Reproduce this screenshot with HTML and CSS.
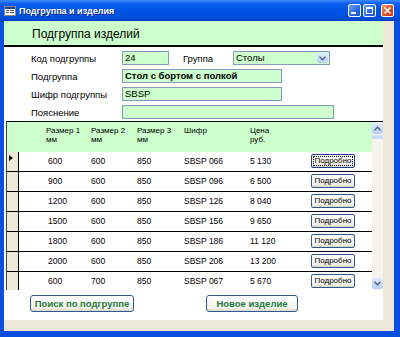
FILE: index.html
```html
<!DOCTYPE html>
<html lang="ru">
<head>
  <meta charset="UTF-8" />
  <title>Подгруппа и изделия</title>
  <link rel="stylesheet" href="styles.css">
</head>
<body>
<div class="window">

  <!-- Заголовок окна -->
  <div class="titlebar">
    <svg class="app-icon" width="12" height="10" viewBox="0 0 12 10">
      <rect x="0.5" y="0.5" width="11" height="9" fill="#fff" stroke="#8a8a8a"/>
      <rect x="1" y="1" width="10" height="2" fill="#1d3f9c"/>
      <rect x="2" y="4" width="3" height="1" fill="#555"/>
      <rect x="6" y="4" width="4" height="1" fill="#555"/>
      <rect x="2" y="6" width="3" height="1" fill="#555"/>
      <rect x="6" y="6" width="4" height="1" fill="#555"/>
    </svg>
    <span class="title">Подгруппа и изделия</span>
    <div class="caption-buttons">
      <span class="cap-btn">
        <svg width="11" height="11" viewBox="0 0 11 11"><rect x="2" y="7" width="5" height="2" fill="#fff"/></svg>
      </span>
      <span class="cap-btn">
        <svg width="11" height="11" viewBox="0 0 11 11"><rect x="2.5" y="2.5" width="6" height="6" fill="none" stroke="#fff"/><rect x="2" y="2" width="7" height="2" fill="#fff"/></svg>
      </span>
      <span class="cap-btn close">
        <svg width="11" height="11" viewBox="0 0 11 11"><path d="M2.5 2.5 L8.5 8.5 M8.5 2.5 L2.5 8.5" stroke="#fff" stroke-width="1.6"/></svg>
      </span>
    </div>
  </div>

  <div class="frame">
    <div class="client">
      <div class="form">

        <div class="form-header">Подгруппа изделий</div>

        <div class="fields">
          <div class="field-row">
            <span class="label">Код подгруппы</span>
            <span class="box box-code">24</span>
            <span class="label label-group">Группа</span>
            <span class="box combo">
              <span class="combo-text">Столы</span>
              <span class="combo-btn">
                <svg width="7" height="5" viewBox="0 0 7 5"><path d="M0.5 0.8 L3.5 3.8 L6.5 0.8" fill="none" stroke="#4d6185" stroke-width="1.4"/></svg>
              </span>
            </span>
          </div>
          <div class="field-row">
            <span class="label">Подгруппа</span>
            <span class="box box-wide bold">Стол с бортом с полкой</span>
          </div>
          <div class="field-row">
            <span class="label">Шифр подгруппы</span>
            <span class="box box-wide">SBSP</span>
          </div>
          <div class="field-row">
            <span class="label">Пояснение</span>
            <span class="box box-note"></span>
          </div>
        </div>

        <!-- Подчинённая форма с изделиями -->
        <div class="subform">
          <div class="grid">
            <div class="grid-head">
              <span></span><span></span>
              <span>Размер 1<br>мм</span>
              <span>Размер 2<br>мм</span>
              <span>Размер 3<br>мм</span>
              <span>Шифр</span>
              <span>Цена<br>руб.</span>
            </div>

            <div class="grid-row current">
              <span class="sel"></span><span></span>
              <span class="c1">600</span><span>600</span><span>850</span><span>SBSP 066</span><span>5 130</span>
              <span><button class="detail focus">Подробно</button></span>
            </div>
            <div class="grid-row">
              <span class="sel"></span><span></span>
              <span class="c1">900</span><span>600</span><span>850</span><span>SBSP 096</span><span>6 500</span>
              <span><button class="detail">Подробно</button></span>
            </div>
            <div class="grid-row">
              <span class="sel"></span><span></span>
              <span class="c1">1200</span><span>600</span><span>850</span><span>SBSP 126</span><span>8 040</span>
              <span><button class="detail">Подробно</button></span>
            </div>
            <div class="grid-row">
              <span class="sel"></span><span></span>
              <span class="c1">1500</span><span>600</span><span>850</span><span>SBSP 156</span><span>9 650</span>
              <span><button class="detail">Подробно</button></span>
            </div>
            <div class="grid-row">
              <span class="sel"></span><span></span>
              <span class="c1">1800</span><span>600</span><span>850</span><span>SBSP 186</span><span>11 120</span>
              <span><button class="detail">Подробно</button></span>
            </div>
            <div class="grid-row">
              <span class="sel"></span><span></span>
              <span class="c1">2000</span><span>600</span><span>850</span><span>SBSP 206</span><span>13 200</span>
              <span><button class="detail">Подробно</button></span>
            </div>
            <div class="grid-row">
              <span class="sel"></span><span></span>
              <span class="c1">600</span><span>700</span><span>850</span><span>SBSP 067</span><span>5 670</span>
              <span><button class="detail">Подробно</button></span>
            </div>
          </div>

          <div class="scrollbar">
            <div class="sb-top">
              <span class="sb-btn">
                <svg width="7" height="5" viewBox="0 0 7 5"><path d="M0.5 4.2 L3.5 1.2 L6.5 4.2" fill="none" stroke="#4d6185" stroke-width="1.4"/></svg>
              </span>
              <span class="sb-thumb"></span>
            </div>
            <span class="sb-btn">
              <svg width="7" height="5" viewBox="0 0 7 5"><path d="M0.5 0.8 L3.5 3.8 L6.5 0.8" fill="none" stroke="#4d6185" stroke-width="1.4"/></svg>
            </span>
          </div>
        </div>

        <div class="form-buttons">
          <button class="cmd cmd-search">Поиск по подгруппе</button>
          <button class="cmd cmd-new">Новое изделие</button>
        </div>

      </div>
    </div>
  </div>
</div>
</body>
</html>
```

FILE: styles.css
```css
* {
  margin: 0;
  padding: 0;
  box-sizing: border-box;
}

body {
  font-family: 'Liberation Sans', Arial, sans-serif;
  background: #fff;
}

.window {
  width: 400px;
  height: 337px;
  display: flex;
  flex-direction: column;
  background: #0a4fe0;
  overflow: hidden;
}

/* заголовок */
.titlebar {
  height: 21px;
  display: flex;
  align-items: center;
  padding: 0 6px 0 4px;
  background: linear-gradient(#3b8cf9 0%, #0b5ced 18%, #0054e3 50%, #0050db 85%, #0041c6 100%);
}

.app-icon {
  margin-right: 3px;
  flex-shrink: 0;
}

.title {
  flex: 1;
  color: #fff;
  font-weight: bold;
  font-size: 9px;
  text-shadow: 1px 1px 0 #0a2a8c;
}

.caption-buttons {
  display: flex;
  gap: 2px;
}

.cap-btn {
  width: 13px;
  height: 13px;
  border: 1px solid #fff;
  border-radius: 2px;
  background: linear-gradient(135deg, #6aa6ff, #2a66e6 60%, #1d52d0);
  display: flex;
  align-items: center;
  justify-content: center;
}

.cap-btn.close {
  margin-left: 3px;
  background: linear-gradient(135deg, #f29a78, #e0511f 55%, #c43a10);
}

/* рамка и клиентская область */
.frame {
  flex: 1;
  display: flex;
  padding: 0 6px 6px 4px;
}

.client {
  flex: 1;
  background: #ece9d8;
}

.form {
  width: 379px;
  height: 299px;
  background: #fff;
  display: flex;
  flex-direction: column;
}

.form-header {
  height: 26px;
  background: #ccffcc;
  border-bottom: 2px solid #000;
  font-size: 12px;
  padding: 6px 0 0 28px;
}

.fields {
  display: flex;
  flex-direction: column;
  gap: 4px;
  padding: 4px 0 0 27px;
}

.field-row {
  display: flex;
  align-items: center;
  height: 14px;
}

.label {
  width: 91px;
  font-size: 9.5px;
}

.label-group {
  width: 50px;
  margin-left: 14px;
}

.box {
  height: 14px;
  border: 1px solid #7f9db9;
  background: #ccffcc;
  font-size: 9.5px;
  line-height: 12px;
  padding-left: 2px;
}

.bold {
  font-weight: bold;
}

.box-code {
  width: 47px;
}

.box-wide {
  width: 160px;
}

.box-note {
  width: 212px;
}

.combo {
  width: 97px;
  display: flex;
  justify-content: space-between;
  padding-right: 1px;
}

.combo-btn {
  width: 11px;
  height: 10px;
  margin-top: 1px;
  border-radius: 2px;
  background: linear-gradient(#e2ebfe, #b9cdf7);
  display: flex;
  align-items: center;
  justify-content: center;
}

/* подчинённая форма */
.subform {
  display: flex;
  width: 377px;
  height: 169px;
  margin: 2px 0 0 2px;
  border-top: 1px solid #000;
  border-left: 1px solid #404040;
}

.grid {
  flex: 1;
  overflow: hidden;
}

.grid-head,
.grid-row {
  display: grid;
  grid-template-columns: 12px 27px 45px 46px 47px 66px 61px 44px 1fr;
}

.grid-head {
  height: 30px;
  background: #ccffcc;
  font-size: 8px;
  line-height: 9px;
  padding-top: 4px;
}

.grid-row {
  height: 20px;
  border-bottom: 1px solid #000;
  font-size: 8.5px;
}

.grid-row > span {
  display: flex;
  align-items: center;
  padding-bottom: 2px;
}

.grid-row .c1 {
  padding-left: 2px;
}

.grid-row .sel {
  background: #ece9d8;
  border-right: 1px solid #000;
  align-items: flex-start;
  padding: 3px 0 0 2px;
}

.current .sel::before {
  content: '';
  border-left: 4px solid #000;
  border-top: 3px solid transparent;
  border-bottom: 3px solid transparent;
}

.detail {
  width: 44px;
  height: 14px;
  border: 1px solid #2c5a8c;
  border-radius: 2px;
  background: linear-gradient(#fff, #f1efe8 80%, #d9d4c8);
  font-family: inherit;
  font-size: 8px;
  color: #000;
}

.detail.focus {
  border-color: #1b3f80;
  outline: 1px dotted #000;
  outline-offset: -3px;
}

.scrollbar {
  width: 11px;
  background: #f5f4ef;
  display: flex;
  flex-direction: column;
  justify-content: space-between;
  padding: 1px 0;
}

.sb-top {
  display: flex;
  flex-direction: column;
}

.sb-btn {
  height: 11px;
  border-radius: 2px;
  background: linear-gradient(#dfe8fd, #b8ccf6);
  display: flex;
  align-items: center;
  justify-content: center;
}

.sb-thumb {
  height: 4px;
  margin-top: 1px;
  background: #cddafa;
}

/* кнопки внизу формы */
.form-buttons {
  display: flex;
  gap: 72px;
  margin-top: 5px;
  padding-left: 26px;
}

.cmd {
  height: 17px;
  border: 1px solid #2c5a8c;
  border-radius: 3px;
  background: linear-gradient(#fff, #f3f1ea 80%, #dcd7cb);
  font-family: inherit;
  font-size: 9.5px;
  font-weight: bold;
  color: #1f7a3f;
}

.cmd-search {
  width: 104px;
}

.cmd-new {
  width: 92px;
}
```
